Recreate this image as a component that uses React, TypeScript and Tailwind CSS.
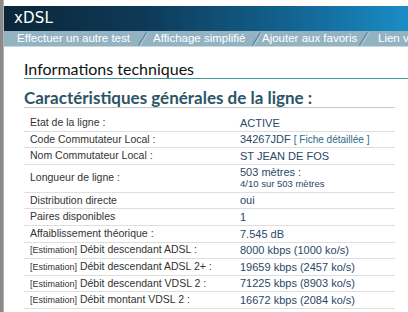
import React from "react";

const Sep = () => (
  <svg width="11" height="15" viewBox="0 0 11 15" className="shrink-0">
    <line x1="1.5" y1="14.5" x2="9.5" y2="1.5" stroke="#5f8599" strokeWidth="1.4" />
    <line x1="2.7" y1="15" x2="10.7" y2="2" stroke="#c9dae3" strokeWidth="0.8" />
  </svg>
);

type Row = { label: React.ReactNode; value: React.ReactNode; tall?: boolean };

const Est = () => <span className="text-[9px]">[Estimation]</span>;

const rows: Row[] = [
  { label: "Etat de la ligne :", value: "ACTIVE" },
  {
    label: "Code Commutateur Local :",
    value: (
      <>
        34267JDF <span className="text-[10px] text-[#2d6a8c]">[ Fiche détaillée ]</span>
      </>
    ),
  },
  { label: "Nom Commutateur Local :", value: "ST JEAN DE FOS" },
  {
    label: "Longueur de ligne :",
    value: (
      <div className="flex flex-col leading-[12px]">
        <span>503 mètres :</span>
        <span className="text-[9.5px]">4/10 sur 503 mètres</span>
      </div>
    ),
    tall: true,
  },
  { label: "Distribution directe", value: "oui" },
  { label: "Paires disponibles", value: "1" },
  { label: "Affaiblissement théorique :", value: "7.545 dB" },
  { label: <><Est /> Débit descendant ADSL :</>, value: "8000 kbps (1000 ko/s)" },
  { label: <><Est /> Débit descendant ADSL 2+ :</>, value: "19659 kbps (2457 ko/s)" },
  { label: <><Est /> Débit descendant VDSL 2 :</>, value: "71225 kbps (8903 ko/s)" },
  { label: <><Est /> Débit montant VDSL 2 :</>, value: "16672 kbps (2084 ko/s)" },
];

export default function App() {
  return (
    <div className="w-[408px] h-[312px] overflow-hidden bg-white flex" style={{ fontFamily: '"Liberation Sans", Arial, sans-serif' }}>
      <div className="w-[4px] shrink-0 bg-[#8a8a8a] border-r border-[#b5b5b5]" />
      <div className="flex-1 min-w-0 flex flex-col">
        <div className="h-[6px]" />
        <div
          className="h-[25px] flex items-center pl-[10px] text-white text-[15px]"
          style={{ background: "linear-gradient(90deg,#0b2638 0%,#0e3a58 35%,#12628f 70%,#1a8dc6 100%)", fontFamily: '"DejaVu Sans", Tahoma, sans-serif' }}
        >
          <span className="tracking-[0.2px]">xDSL</span>
        </div>
        <div className="h-[16px] bg-[#93b3c3] flex items-center pl-[13px] text-white text-[11.5px] whitespace-nowrap border-b border-[#c7d7df] overflow-hidden">
          <div className="w-[136px] shrink-0 flex items-center justify-between pr-[5px]">
            <span>Effectuer un autre test</span>
            <Sep />
          </div>
          <div className="w-[109px] shrink-0 flex items-center justify-between pr-[0px]">
            <span>Affichage simplifié</span>
            <Sep />
          </div>
          <div className="w-[116px] shrink-0 flex items-center justify-between pr-[9px]">
            <span>Ajouter aux favoris</span>
            <Sep />
          </div>
          <span>Lien vers</span>
        </div>
        <div className="pl-[20px] pt-[13px]">
          <div
            className="text-[16px] leading-[18px] text-[#111] border-b border-[#3a9a9c] pb-[0px]"
            style={{ fontFamily: 'Lato, sans-serif' }}
          >
            Informations techniques
          </div>
          <div className="mr-[13px]">
            <div
              className="mt-[9px] text-[17px] leading-[19px] font-bold text-[#2b5565] border-b border-[#c8c8c8] pb-[0px]"
              style={{ fontFamily: 'Lato, sans-serif' }}
            >
              Caractéristiques générales de la ligne :
            </div>
            <div className="mt-[7px] text-[10.5px]">
              {rows.map((r, i) => (
                <div
                  key={i}
                  className={`flex items-center border-b border-[#dedede] ${r.tall ? "h-[28px]" : "h-[16.6px]"}`}
                >
                  <div className="w-[216px] pl-[6px] text-[#333] whitespace-nowrap">{r.label}</div>
                  <div className="flex-1 text-[#2a4868] text-[11px] whitespace-nowrap">{r.value}</div>
                </div>
              ))}
            </div>
          </div>
        </div>
      </div>
    </div>
  );
}
